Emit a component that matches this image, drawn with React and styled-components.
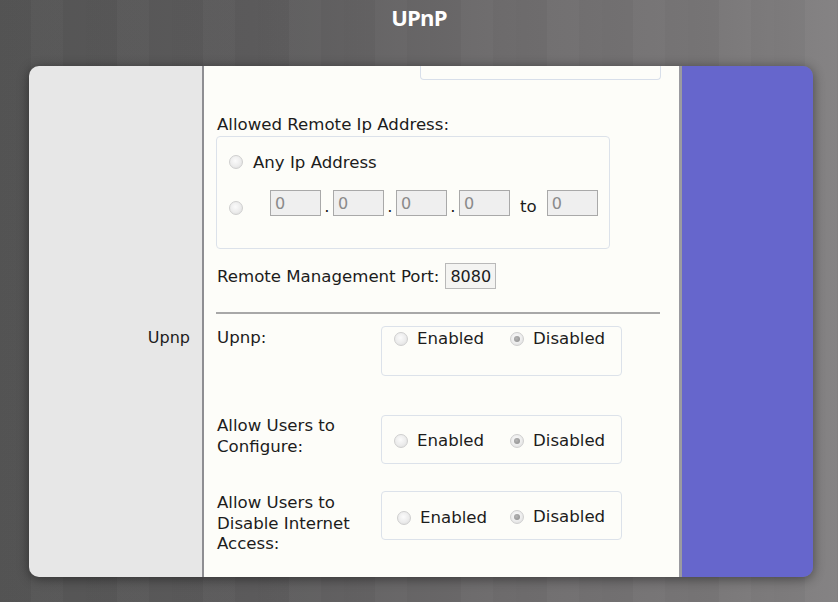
import React from "react";
import styled, { createGlobalStyle } from "styled-components";

const GlobalStyle = createGlobalStyle`
  html, body {
    margin: 0;
    padding: 0;
  }
  body {
    width: 838px;
    height: 602px;
    overflow: hidden;
    font-family: "DejaVu Sans", Verdana, sans-serif;
    background:
      repeating-linear-gradient(90deg, rgba(0, 0, 0, 0.02) 0 31px, rgba(255, 255, 255, 0.015) 31px 63px, rgba(0, 0, 0, 0.01) 63px 86px),
      linear-gradient(90deg, #555555 0%, #5c5b5c 30%, #6e6c6d 60%, #787677 85%, #838182 100%);
  }
`;

const Page = styled.div`
  display: flex;
  flex-direction: column;
  align-items: center;
  height: 602px;
`;

const Title = styled.h1`
  margin: 0;
  padding-top: 3px;
  height: 63px;
  font-family: "Open Sans", "DejaVu Sans", sans-serif;
  font-weight: 700;
  font-size: 22px;
  letter-spacing: -0.8px;
  color: #ffffff;
  line-height: 28px;
`;

const Card = styled.div`
  display: flex;
  width: 784px;
  height: 511px;
  margin-left: 4px;
  border-radius: 10px;
  overflow: hidden;
  box-shadow: 0 2px 12px rgba(0, 0, 0, 0.45);
`;

const Sidebar = styled.div`
  width: 173px;
  flex-shrink: 0;
  background: #e7e7e7;
  padding: 262px 12px 0 0;
  box-sizing: border-box;
  text-align: right;
  font-size: 16px;
  line-height: 20px;
  color: #1c1c1c;
`;

const Content = styled.div`
  width: 480px;
  flex-shrink: 0;
  box-sizing: border-box;
  background: #fdfdf9;
  border-left: 2px solid #8e8e92;
  border-right: 3px solid #9a9aa0;
  padding-left: 12px;
  color: #1c1c1c;
  font-size: 16.6px;
`;

const Accent = styled.div`
  flex: 1;
  background: #6666cc;
`;

const CutBox = styled.div`
  margin-left: 204px;
  width: 241px;
  height: 14px;
  box-sizing: border-box;
  border: 1px solid #d8dfea;
  border-top: none;
  border-radius: 0 0 4px 4px;
`;

const Heading = styled.div`
  margin-top: 35px;
  padding-left: 1px;
  line-height: 20px;
`;

const GroupBox = styled.div`
  margin-top: 1px;
  width: 394px;
  height: 113px;
  box-sizing: border-box;
  border: 1px solid #dce2ea;
  border-radius: 4px;
  padding: 15px 0 0 12px;
  display: flex;
  flex-direction: column;
  gap: 18px;
`;

const Line = styled.div`
  display: flex;
  align-items: center;
  height: ${(p) => p.$h || 20}px;
`;

const Radio = styled.span`
  position: relative;
  flex-shrink: 0;
  width: 14px;
  height: 14px;
  box-sizing: border-box;
  border-radius: 50%;
  border: 1px solid #cfcfcf;
  background: radial-gradient(circle at 45% 40%, #fbfbfb 0%, #ececec 55%, #d9d9d9 100%);
  margin-right: ${(p) => p.$gap || 10}px;
  margin-top: ${(p) => p.$drop || 0}px;

  &::after {
    content: "";
    display: ${(p) => (p.$checked ? "block" : "none")};
    position: absolute;
    left: 3px;
    top: 3px;
    width: 6px;
    height: 6px;
    border-radius: 50%;
    background: radial-gradient(circle at 40% 40%, #b4b4b4, #8c8c8c);
  }
`;

const IpField = styled.span`
  display: inline-flex;
  align-items: center;
  width: ${(p) => p.$w || 51}px;
  height: 26px;
  box-sizing: border-box;
  border: 1px solid ${(p) => (p.$disabled ? "#a9a9a9" : "#b9b9b9")};
  background: ${(p) => (p.$disabled ? "#efefef" : "#f4f4f2")};
  color: ${(p) => (p.$disabled ? "#8a8a8a" : "#1c1c1c")};
  padding-left: 4px;
  font-size: 16px;
  flex-shrink: 0;
`;

const Dot = styled.span`
  width: 12px;
  text-align: center;
  align-self: flex-end;
  line-height: 18px;
`;

const ToWord = styled.span`
  margin: 6px 10px 0 10px;
`;

const PortRow = styled.div`
  margin-top: 14px;
  display: flex;
  align-items: center;
  gap: 6px;
  padding-left: 1px;
`;

const Rule = styled.div`
  margin-top: 23px;
  width: 444px;
  height: 2px;
  background: #a8a8a8;
`;

const OptionRow = styled.div`
  display: grid;
  grid-template-columns: 165px 241px;
  margin-top: ${(p) => p.$top}px;
  align-items: start;
`;

const OptionLabel = styled.div`
  padding-left: 1px;
  padding-top: ${(p) => p.$pad || 0}px;
  line-height: ${(p) => p.$lh || 20}px;
`;

const ChoiceBox = styled.div`
  height: ${(p) => p.$h}px;
  box-sizing: border-box;
  border: 1px solid #dce2ea;
  border-radius: 4px;
  padding: ${(p) => p.$pad}px 0 0 ${(p) => p.$left || 13}px;
  display: flex;
  align-items: ${(p) => (p.$top ? "flex-start" : "center")};
`;

const Choice = styled.span`
  display: inline-flex;
  align-items: center;
  margin-right: ${(p) => p.$space || 0}px;
  margin-top: ${(p) => p.$shift || 0}px;
  line-height: 20px;
`;

const Toggle = ({ top, h, pad, left, lower }) => (
  <ChoiceBox $h={h} $pad={pad} $top={top} $left={left}>
    <Choice $space={lower ? 23 : 26} $shift={lower ? 3 : 0}>
      <Radio $gap={9} />
      Enabled
    </Choice>
    <Choice>
      <Radio $gap={9} $checked />
      Disabled
    </Choice>
  </ChoiceBox>
);

const App = () => {
  const octets = ["0", "0", "0", "0"];

  return (
    <>
      <GlobalStyle />
      <Page>
        <Title>UPnP</Title>
        <Card>
          <Sidebar>Upnp</Sidebar>
          <Content>
            <CutBox />
            <Heading>Allowed Remote Ip Address:</Heading>
            <GroupBox>
              <Line>
                <Radio />
                Any Ip Address
              </Line>
              <Line $h={26}>
                <Radio $gap={27} $drop={10} />
                {octets.map((o, i) => (
                  <React.Fragment key={i}>
                    <IpField $disabled>{o}</IpField>
                    {i < 3 && <Dot>.</Dot>}
                  </React.Fragment>
                ))}
                <ToWord>to</ToWord>
                <IpField $disabled>0</IpField>
              </Line>
            </GroupBox>
            <PortRow>
              Remote Management Port:
              <IpField>8080</IpField>
            </PortRow>
            <Rule />
            <OptionRow $top={12}>
              <OptionLabel $pad={2}>Upnp:</OptionLabel>
              <Toggle top h={50} pad={2} left={12} />
            </OptionRow>
            <OptionRow $top={39}>
              <OptionLabel $lh={21}>
                Allow Users to
                <br />
                Configure:
              </OptionLabel>
              <Toggle h={49} pad={2} left={12} />
            </OptionRow>
            <OptionRow $top={27}>
              <OptionLabel $pad={2} $lh={20.5}>
                Allow Users to
                <br />
                Disable Internet
                <br />
                Access:
              </OptionLabel>
              <Toggle h={49} pad={2} left={15} lower />
            </OptionRow>
          </Content>
          <Accent />
        </Card>
      </Page>
    </>
  );
};

export default App;
